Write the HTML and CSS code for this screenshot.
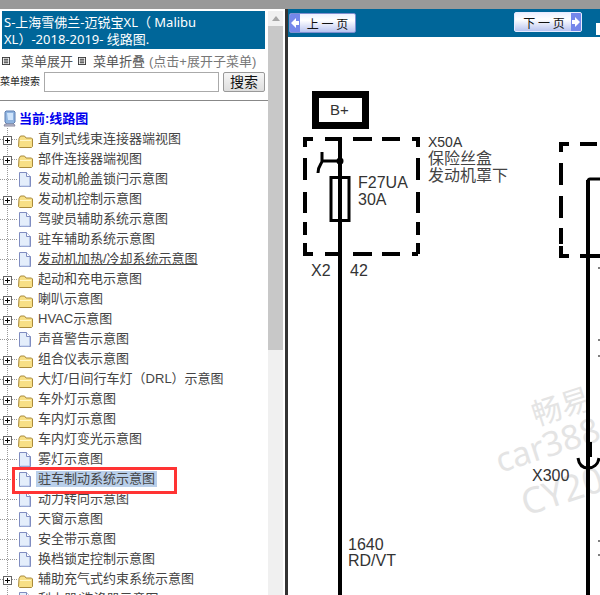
FILE: index.html
```html
<!DOCTYPE html>
<html lang="en">
<head>
    <meta charset="UTF-8">
    <title>线路图</title>
    <link rel="stylesheet" href="styles.css">
</head>
<body>
    <svg class="defs" width="0" height="0">
        <symbol id="plus" viewBox="0 0 9 9">
            <rect x="0.5" y="0.5" width="8" height="8" fill="#fff" stroke="#666"/>
            <path d="M2 4.500h5M4.500 2v5" stroke="#000"/>
        </symbol>
        <symbol id="folder" viewBox="0 0 15 13">
            <path d="M1 3.500 2.500 1h4L8 3h5.500l1 1v7.500l-1 1h-12l-1-1z" fill="#f7df86" stroke="#a98a3c"/>
            <path d="M2 5h11v1H2z" fill="#fff6c8"/>
        </symbol>
        <symbol id="page" viewBox="0 0 13 15">
            <path d="M1.500 .5h7l4 4v10h-11z" fill="#e4eefb" stroke="#7f8cc0"/>
            <path d="M8.500 .5v4h4" fill="#fff" stroke="#7f8cc0"/>
            <path d="M11.500 5v9h-9" fill="none" stroke="#b6c6e8"/>
        </symbol>
        <symbol id="menuicon" viewBox="0 0 9 9">
            <rect x="0.500" y="0.500" width="8" height="8" fill="#fff" stroke="#333"/>
            <path d="M2 2.500h5M2 4.500h5M2 6.500h5" stroke="#111"/>
        </symbol>
    </svg>

    <div class="topbar"></div>
    <div class="frames">
        <div class="side">
            <div class="side-main">
                <div class="title">S-上海雪佛兰-迈锐宝XL（ Malibu XL）-2018-2019- 线路图.</div>
                <div class="menu-row">
                    <svg class="menu-icon"><use href="#menuicon"/></svg><span class="menu-link">菜单展开</span>
                    <svg class="menu-icon second"><use href="#menuicon"/></svg><span class="menu-link">菜单折叠</span>
                    <span class="menu-note">(点击+展开子菜单)</span>
                </div>
                <div class="search-row">
                    <span class="search-label">菜单搜索</span>
                    <input class="search-input" type="text">
                    <button class="search-btn">搜索</button>
                </div>
                <hr class="rule">
                <div class="current">
                    <svg class="pc" width="13" height="17" viewBox="0 0 13 17">
                        <path d="M3 1h8l1 1v10l-2 2H4l-2-2V2z" fill="#8fb4e0" stroke="#5f7fb0"/>
                        <path d="M4 3h6v7H5z" fill="#cfe4fb"/>
                        <path d="M2 14h9l1 2H1z" fill="#c2c2d4" stroke="#8a8aa0"/>
                    </svg>
                    <span>当前:线路图</span>
                </div>
                <ul class="tree">
                    <li class="node"><span class="joint"><svg class="plus"><use href="#plus"/></svg></span><svg class="folder"><use href="#folder"/></svg><a class="label">直列式线束连接器端视图</a></li>
                    <li class="node"><span class="joint"><svg class="plus"><use href="#plus"/></svg></span><svg class="folder"><use href="#folder"/></svg><a class="label">部件连接器端视图</a></li>
                    <li class="node"><span class="joint"></span><svg class="page"><use href="#page"/></svg><a class="label">发动机舱盖锁闩示意图</a></li>
                    <li class="node"><span class="joint"><svg class="plus"><use href="#plus"/></svg></span><svg class="folder"><use href="#folder"/></svg><a class="label">发动机控制示意图</a></li>
                    <li class="node"><span class="joint"></span><svg class="page"><use href="#page"/></svg><a class="label">驾驶员辅助系统示意图</a></li>
                    <li class="node"><span class="joint"></span><svg class="page"><use href="#page"/></svg><a class="label">驻车辅助系统示意图</a></li>
                    <li class="node"><span class="joint"></span><svg class="page"><use href="#page"/></svg><a class="label hover">发动机加热/冷却系统示意图</a></li>
                    <li class="node"><span class="joint"><svg class="plus"><use href="#plus"/></svg></span><svg class="folder"><use href="#folder"/></svg><a class="label">起动和充电示意图</a></li>
                    <li class="node"><span class="joint"><svg class="plus"><use href="#plus"/></svg></span><svg class="folder"><use href="#folder"/></svg><a class="label">喇叭示意图</a></li>
                    <li class="node"><span class="joint"><svg class="plus"><use href="#plus"/></svg></span><svg class="folder"><use href="#folder"/></svg><a class="label">HVAC示意图</a></li>
                    <li class="node"><span class="joint"></span><svg class="page"><use href="#page"/></svg><a class="label">声音警告示意图</a></li>
                    <li class="node"><span class="joint"><svg class="plus"><use href="#plus"/></svg></span><svg class="folder"><use href="#folder"/></svg><a class="label">组合仪表示意图</a></li>
                    <li class="node"><span class="joint"><svg class="plus"><use href="#plus"/></svg></span><svg class="folder"><use href="#folder"/></svg><a class="label">大灯/日间行车灯（DRL）示意图</a></li>
                    <li class="node"><span class="joint"><svg class="plus"><use href="#plus"/></svg></span><svg class="folder"><use href="#folder"/></svg><a class="label">车外灯示意图</a></li>
                    <li class="node"><span class="joint"><svg class="plus"><use href="#plus"/></svg></span><svg class="folder"><use href="#folder"/></svg><a class="label">车内灯示意图</a></li>
                    <li class="node"><span class="joint"><svg class="plus"><use href="#plus"/></svg></span><svg class="folder"><use href="#folder"/></svg><a class="label">车内灯变光示意图</a></li>
                    <li class="node"><span class="joint"></span><svg class="page"><use href="#page"/></svg><a class="label">雾灯示意图</a></li>
                    <li class="node"><span class="joint"></span><svg class="page"><use href="#page"/></svg><a class="label selected">驻车制动系统示意图</a></li>
                    <li class="node"><span class="joint"></span><svg class="page"><use href="#page"/></svg><a class="label">动力转向示意图</a></li>
                    <li class="node"><span class="joint"></span><svg class="page"><use href="#page"/></svg><a class="label">天窗示意图</a></li>
                    <li class="node"><span class="joint"></span><svg class="page"><use href="#page"/></svg><a class="label">安全带示意图</a></li>
                    <li class="node"><span class="joint"></span><svg class="page"><use href="#page"/></svg><a class="label">换档锁定控制示意图</a></li>
                    <li class="node"><span class="joint"><svg class="plus"><use href="#plus"/></svg></span><svg class="folder"><use href="#folder"/></svg><a class="label">辅助充气式约束系统示意图</a></li>
                    <li class="node"><span class="joint"></span><svg class="page"><use href="#page"/></svg><a class="label">刮水器/洗涤器示意图</a></li>
                </ul>
            </div>
            <div class="scrollbar">
                <div class="scroll-up"></div>
                <div class="scroll-thumb"></div>
            </div>
        </div>
        <div class="splitter"></div>
        <div class="content">
            <div class="pager">
                <button class="page-btn prev">
                    <svg class="page-arrow" viewBox="0 0 10 18"><path d="M1 9l5-5v3h3v4H6v3z" fill="#fff"/></svg>
                    <span class="page-text">上 一 页</span>
                </button>
                <button class="page-btn next">
                    <span class="page-text">下 一 页</span>
                    <svg class="page-arrow" viewBox="0 0 10 18"><path d="M9 9L4 4v3H1v4h3v3z" fill="#fff"/></svg>
                </button>
                <span class="pager-stub"></span>
            </div>
            <svg class="diagram" viewBox="288 37 312 558" width="312" height="558">
                <g class="wm">
                    <text class="wm-cn" x="536" y="426" transform="rotate(-18 536 426)">畅易</text>
                    <text class="wm-en" x="500" y="473" transform="rotate(-18 500 473)">car388</text>
                    <text class="wm-big" x="526" y="516" transform="rotate(-18 526 516)">CY20</text>
                </g>
                <g fill="none" stroke="#000">
                    <rect x="315.500" y="94.500" width="50" height="31" stroke-width="7"/>
                    <path stroke-width="4" d="M305 147v-8h8M325 139h15M353 139h19M382 139h18M412 139h6v8M305 158v22M305 192v21M305 222v13M305 243v11h8M325 254h15M353 254h19M382 254h18M412 254h6M418 158v22M418 192v21M418 222v13M418 243v11"/>
                    <path stroke-width="4" d="M340 137v458"/>
                    <path stroke-width="3" d="M340 161h-17M322 152v9c0 3-4 4-4 12"/>
                    <rect x="331" y="177.500" width="18" height="43" stroke-width="3"/>
                    <path stroke-width="4" d="M561 152v-8h8M580 144h17M561 163v22M561 196v22M561 228v16M561 246v10h8M580 256h20"/>
                    <path stroke-width="3" d="M600 179h-10c-1 0-2 1-2 2"/>
                    <path stroke-width="4" d="M588 180v415"/>
                    <path stroke-width="6" d="M589 442v15"/>
                    <path stroke-width="3" d="M578 458c1 7 5 10 10 10s10-3 11-10"/>
                    <path stroke-width="1" d="M598 268h2M598 340h2M598 356h2M598 541h2M598 555h2"/>
                </g>
                <circle cx="340" cy="161" r="3.500"/>
                <g class="wire-text">
                    <text class="plus-text" x="330" y="115">B+</text>
                    <text x="358" y="188">F27UA</text>
                    <text x="358" y="205">30A</text>
                    <text x="311" y="276">X2</text>
                    <text x="350" y="276">42</text>
                    <text class="small" x="428" y="147">X50A</text>
                    <text class="cn" x="428" y="164">保险丝盒</text>
                    <text class="cn" x="428" y="181">发动机罩下</text>
                    <text x="532" y="481">X300</text>
                    <text x="348" y="550">1640</text>
                    <text x="348" y="566">RD/VT</text>
                </g>
            </svg>
        </div>
    </div>
    <div class="callout"></div>
</body>
</html>
```
FILE: styles.css
```css
html, body { margin: 0; padding: 0; height: 595px; overflow: hidden; background: #fff; }
body { font-family: "Liberation Sans", "Noto Sans CJK SC", sans-serif; font-size: 13px; color: #444; }
.defs { display: block; height: 0; }

.topbar { height: 9px; background: #999; }
.frames { display: flex; height: 586px; overflow: hidden; }

/* left frame */
.side { display: flex; width: 285px; padding-top: 2px; box-sizing: border-box; overflow: hidden; }
.side-main { width: 268px; flex: none; }
.title {
    margin-left: 2px;
    width: 263px;
    height: 38px;
    padding: 3px 60px 0 2px;
    box-sizing: border-box;
    background: #006699;
    color: #fff;
    font-family: "Noto Sans", "Noto Sans CJK SC", sans-serif;
    font-size: 13px;
    line-height: 17px;
}
.menu-row { display: flex; align-items: center; height: 21px; margin-top: 1px; padding-left: 2px; white-space: nowrap; }
.menu-icon { width: 8px; height: 8px; flex: none; }
.menu-icon.second { margin-left: 5px; }
.menu-link { margin-left: 11px; color: #555; }
.menu-icon.second + .menu-link { margin-left: 7px; }
.menu-note { margin-left: 4px; color: #777; }
.search-row { display: flex; align-items: flex-start; height: 22px; padding-top: 1px; box-sizing: border-box; }
.search-label { width: 44px; flex: none; font-size: 10px; line-height: 20px; color: #222; }
.search-input { width: 175px; height: 20px; padding: 0; box-sizing: border-box; border: 1px solid #aaa; flex: none; }
.search-btn {
    width: 42px;
    height: 20px;
    margin-left: 4px;
    padding: 0;
    border: 1px solid #999;
    border-radius: 2px;
    background: linear-gradient(#f6f6f6, #dedede);
    font-family: inherit;
    font-size: 14px;
    line-height: 18px;
    color: #111;
}
.rule { height: 1px; margin: 7px 0 8px; border: 0; background: #888; }
.current { display: flex; align-items: center; height: 19px; padding-bottom: 3px; box-sizing: border-box; padding-left: 3px; color: #0000ee; font-size: 13px; font-weight: bold; }
.pc { flex: none; margin: 3px 3px 0 0; width: 13px; }

.tree { margin: 0; padding: 0; list-style: none; }
.node { display: flex; align-items: center; height: 20px; white-space: nowrap; }
.joint {
    display: flex;
    align-items: center;
    width: 18px;
    height: 20px;
    flex: none;
    background-image:
        linear-gradient(#999 1px, transparent 1px),
        linear-gradient(to right, #999 1px, transparent 1px);
    background-size: 1px 2px, 2px 1px;
    background-position: 7px 0, 8px 11px;
    background-repeat: repeat-y, repeat-x;
}
.plus { width: 9px; height: 9px; margin: 4px 0 0 3px; }
.folder { width: 15px; height: 13px; flex: none; margin-top: 6px; }
.page { width: 13px; height: 15px; flex: none; margin: 2px 2px 0 0; }
.label { margin: 2px 0 0 4px; padding: 0 1px; line-height: 18px; color: #444; }
.label.hover { text-decoration: underline; }
.label.selected { margin-left: 3px; padding: 0 2px; line-height: 16px; background: #b9cfea; }

.scrollbar { width: 15px; flex: none; background: #f0f0f0; }
.scroll-up { height: 15px; display: flex; justify-content: center; align-items: center; }
.scroll-up::before { content: ""; border: 4px solid transparent; border-bottom: 5px solid #a6a6a6; border-top: 0; }
.scroll-thumb { height: 324px; background: #c8c8c8; }

.splitter { width: 3px; flex: none; background: #333; }

/* right frame */
.content { width: 312px; flex: none; }
.pager { display: flex; justify-content: space-between; align-items: center; height: 28px; padding-left: 1px; background: #006699; box-sizing: border-box; }
.page-btn {
    display: flex;
    align-items: center;
    width: 67px;
    height: 20px;
    padding: 0;
    border: 1px solid #7f8fd0;
    border-radius: 2px;
    background: linear-gradient(#eef1ff, #ffffff 35%, #b9c4f0);
    font-family: "Noto Sans CJK SC", sans-serif;
    font-size: 12px;
    color: #111;
    overflow: hidden;
}
.page-btn.next { margin: -2px 14px 0 auto; width: 68px; border-color: #e8ecff; }
.page-btn.next .page-text { padding-left: 2px; }
.page-arrow { width: 10px; height: 100%; background: #7587ea; flex: none; }
.page-text { flex: 1; white-space: nowrap; }
.pager-stub { width: 4px; height: 12px; margin-top: 12px; background: #fff; flex: none; }
.diagram { display: block; }

.wire-text text { font-family: "Liberation Sans", sans-serif; font-size: 16px; fill: #333; }
.wire-text .small { font-size: 14px; }
.wire-text .cn { font-family: "Noto Sans CJK SC", sans-serif; font-size: 16px; fill: #444; }
.wire-text .plus-text { font-size: 15px; }
.wm text { fill: #e4e4e4; font-family: "Noto Sans", "Noto Sans CJK SC", sans-serif; }
.wm-cn { font-size: 30px; }
.wm-en { font-size: 34px; }
.wm .wm-big { font-size: 36px; }

/* red mark drawn over the tree */
.callout { position: absolute; left: 12px; top: 467px; width: 159px; height: 21px; border: 3px solid #ff3333; }
```
